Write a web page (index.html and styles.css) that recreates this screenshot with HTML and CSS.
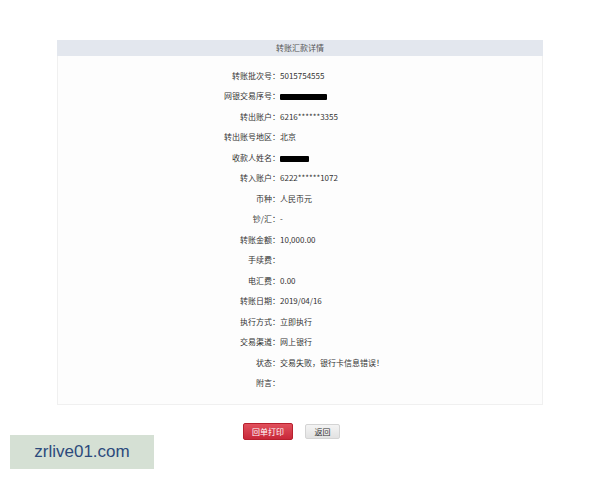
FILE: index.html
```html
<!DOCTYPE html>
<html lang="zh-CN">

<head>
    <meta charset="UTF-8">
    <meta name="viewport" content="width=device-width, initial-scale=1.0">
    <title>转账汇款详情</title>
    <link rel="stylesheet" href="styles.css">
</head>

<body>
    <div class="panel">
        <div class="panel-title">转账汇款详情</div>
        <div class="panel-body">
            <div class="row"><span class="label">转账批次号：</span><span class="value">5015754555</span></div>
            <div class="row"><span class="label">网银交易序号：</span><span class="value"><i class="mask mask-long"></i></span></div>
            <div class="row"><span class="label">转出账户：</span><span class="value">6216******3355</span></div>
            <div class="row"><span class="label">转出账号地区：</span><span class="value">北京</span></div>
            <div class="row"><span class="label">收款人姓名：</span><span class="value"><i class="mask mask-short"></i></span></div>
            <div class="row"><span class="label">转入账户：</span><span class="value">6222******1072</span></div>
            <div class="row"><span class="label">币种：</span><span class="value">人民币元</span></div>
            <div class="row"><span class="label">钞/汇：</span><span class="value">-</span></div>
            <div class="row"><span class="label">转账金额：</span><span class="value">10,000.00</span></div>
            <div class="row"><span class="label">手续费：</span><span class="value"></span></div>
            <div class="row"><span class="label">电汇费：</span><span class="value">0.00</span></div>
            <div class="row"><span class="label">转账日期：</span><span class="value">2019/04/16</span></div>
            <div class="row"><span class="label">执行方式：</span><span class="value">立即执行</span></div>
            <div class="row"><span class="label">交易渠道：</span><span class="value">网上银行</span></div>
            <div class="row"><span class="label">状态：</span><span class="value">交易失败，银行卡信息错误！</span></div>
            <div class="row"><span class="label">附言：</span><span class="value"></span></div>
        </div>
    </div>

    <div class="actions">
        <button class="btn btn-print">回单打印</button>
        <button class="btn btn-back">返回</button>
    </div>

    <!-- 水印 -->
    <div class="watermark">zrlive01.com</div>
</body>

</html>
```

FILE: styles.css
```css
body {
    margin: 0;
    padding: 40px 0 0;
    font-family: "Noto Sans CJK SC", "Noto Sans", sans-serif;
    font-size: 8px;
    color: #333;
    background-color: #fff;
}

.panel {
    width: 486px;
    margin: 0 auto;
}

.panel-title {
    height: 16px;
    line-height: 16px;
    text-align: center;
    color: #555;
    background-color: #e3e7ee;
}

.panel-body {
    padding: 10px 0 10px;
    border: 1px solid #f0f0f0;
    border-top: none;
    background-color: #fdfdfd;
}

.row {
    display: grid;
    grid-template-columns: 222px 1fr;
    height: 20.47px;
    line-height: 20.47px;
}

.label {
    text-align: right;
}

.mask {
    display: inline-block;
    vertical-align: middle;
    background-color: #000;
    border-radius: 1px;
}

.mask-long {
    width: 47px;
    height: 6px;
}

.mask-short {
    width: 29px;
    height: 6px;
}

.actions {
    display: flex;
    justify-content: center;
    align-items: center;
    gap: 12px;
    padding: 18px 17px 0 0;
}

.btn {
    font-family: inherit;
    font-size: 8px;
    padding: 0;
    border-radius: 2px;
    cursor: pointer;
}

.btn-print {
    width: 50px;
    height: 17px;
    color: #fff;
    border: 1px solid #b8202e;
    background: linear-gradient(#e0505c, #c9283a);
}

.btn-back {
    width: 35px;
    height: 15px;
    color: #333;
    border: 1px solid #d4d4d4;
    background: linear-gradient(#f4f4f4, #e2e2e2);
}

.watermark {
    position: absolute;
    left: 10px;
    top: 435px;
    width: 144px;
    height: 34px;
    line-height: 34px;
    text-align: center;
    font-family: "Liberation Sans", Arial, sans-serif;
    font-size: 17px;
    color: #2c4a7c;
    background-color: #d5e0d4;
}
```
